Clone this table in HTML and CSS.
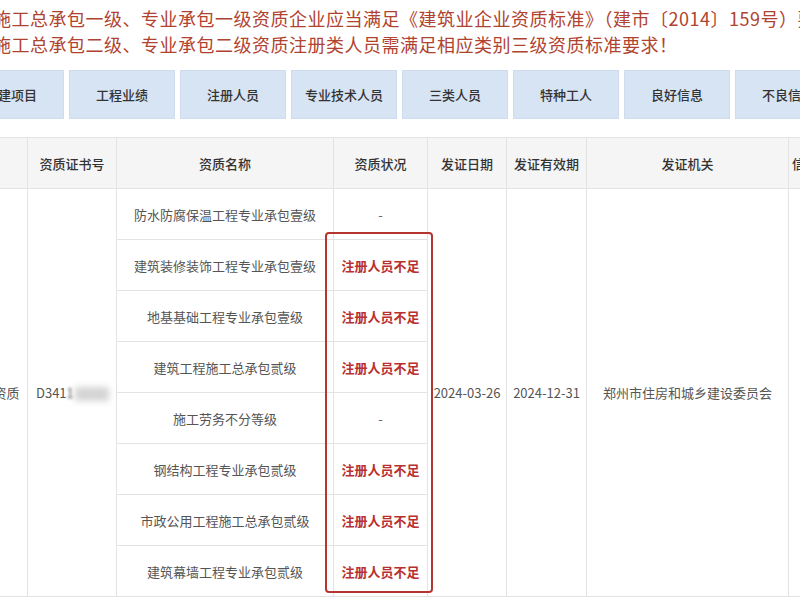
FILE: index.html
```html
<!DOCTYPE html>
<html lang="zh-CN">
<head>
<meta charset="utf-8">
<title>资质信息</title>
<link rel="stylesheet" href="styles.css">
</head>
<body>
<div class="notice">
  <p>施工总承包一级、专业承包一级资质企业应当满足《建筑业企业资质标准》（建市〔2014〕159号）要求。</p>
  <p>施工总承包二级、专业承包二级资质注册类人员需满足相应类别三级资质标准要求！</p>
</div>
<nav class="tabs">
  <div class="tab">在建项目</div>
  <div class="tab">工程业绩</div>
  <div class="tab">注册人员</div>
  <div class="tab">专业技术人员</div>
  <div class="tab">三类人员</div>
  <div class="tab">特种工人</div>
  <div class="tab">良好信息</div>
  <div class="tab">不良信息</div>
</nav>
<div class="table-wrap">
  <table class="qual">
    <colgroup>
      <col class="c-type"><col class="c-cert"><col class="c-name"><col class="c-state"><col class="c-date"><col class="c-valid"><col class="c-org"><col class="c-more">
    </colgroup>
    <thead>
      <tr><th>类别</th><th>资质证书号</th><th>资质名称</th><th>资质状况</th><th>发证日期</th><th>发证有效期</th><th>发证机关</th><th class="more">信息</th></tr>
    </thead>
    <tbody>
      <tr>
        <td rowspan="8">建筑业资质</td>
        <td rowspan="8" class="cert">D341<span class="blur">1</span><span class="blur-box"></span></td>
        <td>防水防腐保温工程专业承包壹级</td>
        <td class="dash">-</td>
        <td rowspan="8">2024-03-26</td>
        <td rowspan="8">2024-12-31</td>
        <td rowspan="8">郑州市住房和城乡建设委员会</td>
        <td rowspan="8"></td>
      </tr>
      <tr><td>建筑装修装饰工程专业承包壹级</td><td class="warn">注册人员不足</td></tr>
      <tr><td>地基基础工程专业承包壹级</td><td class="warn">注册人员不足</td></tr>
      <tr><td>建筑工程施工总承包贰级</td><td class="warn">注册人员不足</td></tr>
      <tr><td>施工劳务不分等级</td><td class="dash">-</td></tr>
      <tr><td>钢结构工程专业承包贰级</td><td class="warn">注册人员不足</td></tr>
      <tr><td>市政公用工程施工总承包贰级</td><td class="warn">注册人员不足</td></tr>
      <tr><td>建筑幕墙工程专业承包贰级</td><td class="warn">注册人员不足</td></tr>
    </tbody>
  </table>
  <div class="highlight"></div>
</div>
</body>
</html>
```
FILE: styles.css
```css
html, body {
  margin: 0;
  padding: 0;
  background: #fff;
  overflow: hidden;
  width: 800px;
  height: 600px;
}
body {
  font-family: "Noto Sans CJK SC", "Noto Sans", sans-serif;
  color: #333;
}
.notice {
  padding-top: 5px;
  margin-left: -7px;
  color: #b0432f;
  font-size: 18px;
  line-height: 26px;
  letter-spacing: 0.5px;
  white-space: nowrap;
}
.notice p {
  margin: 0;
}
.tabs {
  display: flex;
  gap: 5px;
  margin: 13px 0 0 -42px;
  height: 49px;
}
.tab {
  flex: 0 0 106px;
  box-sizing: border-box;
  background: #d7e4f4;
  border: 1px solid #cfdcee;
  display: flex;
  align-items: center;
  justify-content: center;
  font-size: 13px;
  font-weight: 500;
  color: #333;
  white-space: nowrap;
  overflow: hidden;
}
.table-wrap {
  position: relative;
  margin: 18px 0 0 -54px;
  width: 902px;
}
.qual {
  table-layout: fixed;
  border-collapse: collapse;
  width: 902px;
  font-size: 13px;
}
.c-type { width: 81px; }
.c-cert { width: 89px; }
.c-name { width: 217px; }
.c-state { width: 94px; }
.c-date { width: 79px; }
.c-valid { width: 80px; }
.c-org { width: 202px; }
.c-more { width: 60px; }
.qual th, .qual td {
  border: 1px solid #e3e3e3;
  height: 50px;
  padding: 0;
  text-align: center;
  vertical-align: middle;
  white-space: nowrap;
  overflow: hidden;
}
.qual th {
  background: #f5f5f5;
  font-weight: 500;
  color: #333;
}
.qual th.more {
  text-align: left;
  padding-left: 3px;
}
.qual td {
  color: #555;
}
.qual td.cert {
  text-align: left;
  padding-left: 8px;
  color: #555;
}
.blur {
  filter: blur(1.5px);
}
.blur-box {
  display: inline-block;
  width: 34px;
  height: 14px;
  margin-left: 1px;
  vertical-align: middle;
  background: #d4d4d4;
  filter: blur(3px);
}
.qual td.warn {
  color: #b8302f;
  font-weight: 700;
}
.qual td.dash {
  color: #666;
}
.highlight {
  position: absolute;
  left: 379px;
  top: 95px;
  width: 108px;
  height: 361px;
  box-sizing: border-box;
  border: 2px solid #b5362e;
  border-radius: 4px;
}
```
